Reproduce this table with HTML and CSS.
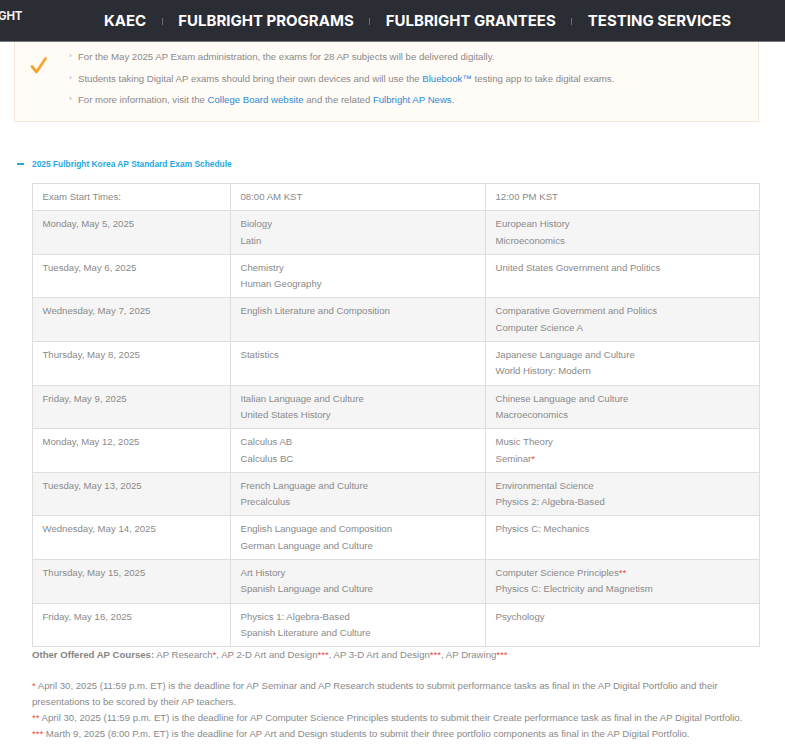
FILE: index.html
```html
<!DOCTYPE html>
<html lang="en">
<head>
<meta charset="utf-8">
<title>2025 Fulbright Korea AP Standard Exam Schedule</title>
<link rel="stylesheet" href="styles.css">
</head>
<body>
<header class="topbar">
  <span class="logo">GHT</span>
  <nav class="nav">
    <a class="nav-item" href="#">KAEC</a>
    <span class="nav-sep"></span>
    <a class="nav-item" href="#">FULBRIGHT PROGRAMS</a>
    <span class="nav-sep"></span>
    <a class="nav-item" href="#">FULBRIGHT GRANTEES</a>
    <span class="nav-sep"></span>
    <a class="nav-item" href="#">TESTING SERVICES</a>
  </nav>
</header>

<main class="page">
  <div class="notice">
    <svg class="check" width="17" height="17" viewBox="0 0 17 17" aria-hidden="true">
      <path d="M2 9.5 L6.5 15 L15.5 1.5" fill="none" stroke="#f8a532" stroke-width="2.8" stroke-linecap="round" stroke-linejoin="round"/>
    </svg>
    <ul class="notice-list">
      <li>For the May 2025 AP Exam administration, the exams for 28 AP subjects will be delivered digitally.</li>
      <li>Students taking Digital AP exams should bring their own devices and will use the <a class="link" href="#">Bluebook™</a> testing app to take digital exams.</li>
      <li>For more information, visit the <a class="link" href="#">College Board website</a> and the related <a class="link" href="#">Fulbright AP News</a>.</li>
    </ul>
  </div>

  <section class="schedule">
    <h3 class="acc-title"><span class="minus"></span>2025 Fulbright Korea AP Standard Exam Schedule</h3>
    <table class="exam-table">
      <colgroup>
        <col class="c1"><col class="c2"><col class="c3">
      </colgroup>
      <tbody>
        <tr class="head"><td>Exam Start Times:</td><td>08:00 AM KST</td><td>12:00 PM KST</td></tr>
        <tr class="alt"><td>Monday, May 5, 2025</td><td>Biology<br>Latin</td><td>European History<br>Microeconomics</td></tr>
        <tr><td>Tuesday, May 6, 2025</td><td>Chemistry<br>Human Geography</td><td>United States Government and Politics</td></tr>
        <tr class="alt"><td>Wednesday, May 7, 2025</td><td>English Literature and Composition</td><td>Comparative Government and Politics<br>Computer Science A</td></tr>
        <tr><td>Thursday, May 8, 2025</td><td>Statistics</td><td>Japanese Language and Culture<br>World History: Modern</td></tr>
        <tr class="alt"><td>Friday, May 9, 2025</td><td>Italian Language and Culture<br>United States History</td><td>Chinese Language and Culture<br>Macroeconomics</td></tr>
        <tr><td>Monday, May 12, 2025</td><td>Calculus AB<br>Calculus BC</td><td>Music Theory<br>Seminar<span class="req">*</span></td></tr>
        <tr class="alt"><td>Tuesday, May 13, 2025</td><td>French Language and Culture<br>Precalculus</td><td>Environmental Science<br>Physics 2: Algebra-Based</td></tr>
        <tr><td>Wednesday, May 14, 2025</td><td>English Language and Composition<br>German Language and Culture</td><td>Physics C: Mechanics</td></tr>
        <tr class="alt"><td>Thursday, May 15, 2025</td><td>Art History<br>Spanish Language and Culture</td><td>Computer Science Principles<span class="req">**</span><br>Physics C: Electricity and Magnetism</td></tr>
        <tr><td>Friday, May 16, 2025</td><td>Physics 1: Algebra-Based<br>Spanish Literature and Culture</td><td>Psychology</td></tr>
      </tbody>
    </table>
    <p class="other"><strong>Other Offered AP Courses:</strong> AP Research<span class="req">*</span>, AP 2-D Art and Design<span class="req">***</span>, AP 3-D Art and Design<span class="req">***</span>, AP Drawing<span class="req">***</span></p>
    <div class="notes">
      <p class="note"><span class="req">*</span> April 30, 2025 (11:59 p.m. ET) is the deadline for AP Seminar and AP Research students to submit performance tasks as final in the AP Digital Portfolio and their presentations to be scored by their AP teachers.</p>
      <p class="note"><span class="req">**</span> April 30, 2025 (11:59 p.m. ET) is the deadline for AP Computer Science Principles students to submit their Create performance task as final in the AP Digital Portfolio.</p>
      <p class="note"><span class="req">***</span> Marth 9, 2025 (8:00 P.m. ET) is the deadline for AP Art and Design students to submit their three portfolio components as final in the AP Digital Portfolio.</p>
    </div>
  </section>
</main>
</body>
</html>
```

FILE: styles.css
```css
html, body {
  margin: 0;
  padding: 0;
  background: #fff;
}

body {
  font-family: "Liberation Sans", Arial, sans-serif;
  color: #8a8a8a;
  font-size: 9.6px;
  line-height: 16.3px;
}

/* ---------- top bar ---------- */
.topbar {
  box-sizing: border-box;
  height: 42px;
  background: #2b2d35;
  border-bottom: 1px solid #77787c;
  display: flex;
  align-items: center;
}

.logo {
  flex: 0 0 106px;
  align-self: flex-start;
  padding-top: 10px;
  font-family: Inter, "DejaVu Sans", sans-serif;
  font-weight: 700;
  font-size: 11.5px;
  line-height: 13px;
  color: #f2f2f2;
  margin-left: -2px;
  letter-spacing: -0.2px;
}

.nav {
  display: flex;
  align-items: center;
  padding-top: 1px;
}

.nav-item {
  font-family: Inter, "DejaVu Sans", sans-serif;
  font-weight: 700;
  font-size: 15px;
  letter-spacing: 0;
  line-height: 20px;
  color: #fff;
  text-decoration: none;
}

.nav-sep {
  display: block;
  width: 1px;
  height: 7px;
  background: #6d6e74;
  margin: 1px 15.5px 0;
}

/* ---------- page ---------- */
.page {
  padding: 0 26px 20px 14px;
}

.notice {
  box-sizing: border-box;
  height: 80px;
  background: #fffbf7;
  border: 1px solid #f5e6da;
  border-top: none;
  display: flex;
  align-items: flex-start;
}

.check {
  flex: 0 0 auto;
  margin: 15px 0 0 15px;
}

.notice-list {
  list-style: none;
  margin: 4px 0 0 22px;
  padding: 0;
  line-height: 21.5px;
}

.notice-list li {
  position: relative;
  padding-left: 9px;
}

.notice-list li::before {
  content: "\203A";
  position: absolute;
  left: 0;
  top: -1px;
  font-size: 8px;
  color: #a5a5a5;
}

.link {
  color: #2b8bd2;
  text-decoration: none;
}

/* ---------- schedule ---------- */
.acc-title {
  display: flex;
  align-items: center;
  margin: 36px 0 13px 3px;
  font-size: 8.4px;
  line-height: 12px;
  font-weight: 700;
  color: #27a8e0;
}

.minus {
  display: block;
  width: 7px;
  height: 2px;
  background: #27a8e0;
  margin-right: 8px;
}

.schedule {
  margin: 0;
}

.exam-table {
  margin-left: 18px;
  width: 727px;
  border-collapse: collapse;
  table-layout: fixed;
}

.c1 { width: 198px; }
.c2 { width: 255px; }
.c3 { width: 274px; }

.exam-table td {
  border: 1px solid #dedede;
  padding: 5px 9.5px;
  vertical-align: top;
  color: #8a8a8a;
}

.exam-table tr.alt td {
  background: #f5f5f5;
}

.req {
  color: #e8473e;
}

.other {
  margin: 0 0 0 18px;
}

.other strong {
  color: #858585;
}

.notes {
  margin: 14.7px 0 0 18px;
  width: 727px;
}

.note {
  margin: 0;
  line-height: 16px;
}
```
